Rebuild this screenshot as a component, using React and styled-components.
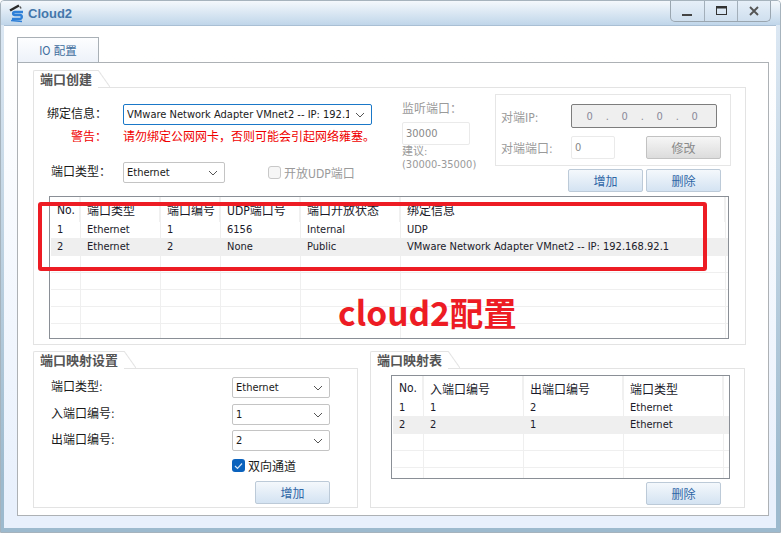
import React from "react";
import styled, { createGlobalStyle } from "styled-components";

const Global = createGlobalStyle`
  html, body { margin: 0; padding: 0; background: #fff; overflow: hidden; }
  * { box-sizing: border-box; }
  body { font-family: "DejaVu Sans Condensed", "Liberation Sans", "Noto Sans CJK SC", sans-serif; font-size: 11px; color: #1a1a1a; }
`;

const Window = styled.div`
  position: relative;
  width: 781px;
  height: 533px;
  display: flex;
  flex-direction: column;
  border: 1px solid #a6b3bd;
  border-radius: 4px 4px 0 0;
  background: linear-gradient(#dfeaf5, #9dbace 90%);
  overflow: hidden;
`;
const TitleBar = styled.div`
  height: 24px;
  flex: none;
  display: flex;
  align-items: flex-start;
  justify-content: space-between;
  padding: 0 9px 0 8px;
  background: linear-gradient(#f4f8fc, #c0d6ea);
`;
const TitleGroup = styled.div`
  display: flex;
  align-items: center;
  gap: 3px;
  height: 25px;
`;
const TitleText = styled.span`
  font-family: "Liberation Sans", sans-serif;
  font-size: 13px;
  font-weight: 700;
  color: #4477ab;
`;
const Controls = styled.div`
  display: flex;
  height: 21px;
  border: 1px solid #9aa6b0;
  border-top: none;
  border-radius: 0 0 5px 5px;
  background: linear-gradient(#e6eff8, #cfdfee);
`;
const Control = styled.div`
  width: 33px;
  display: flex;
  align-items: center;
  justify-content: center;
  border-left: ${(p) => (p.$first ? "none" : "1px solid #a3afba")};
  color: #444;
`;
const Client = styled.div`
  flex: 1;
  margin: 0 4px 4px 3px;
  padding: 11px 7px 12px 13px;
  background: linear-gradient(#ffffff 6%, #e8f0fc 95%);
  border-top: 1px solid #a9bfd4;
`;
const TabStrip = styled.div`
  display: flex;
  height: 25px;
`;
const Tab = styled.div`
  width: 82px;
  height: 26px;
  border: 1px solid #a9b0b6;
  background: linear-gradient(#fdfeff, #edf2f9);
  color: #3f6d9d;
  display: flex;
  align-items: center;
  justify-content: center;
  font-size: 11.5px;
`;
const TabPanel = styled.div`
  width: 752px;
  height: 454px;
  padding: 7px 15px 0;
  background: #fff;
  border: 1px solid #adb1b5;
`;
const Group = styled.section`
  width: ${(p) => p.$w}px;
`;
const GroupHead = styled.div`
  display: flex;
  height: 18px;
`;
const GroupTitle = styled.div`
  width: ${(p) => p.$w}px;
  padding-left: 6px;
  border: 1px solid #e3e3e3;
  border-width: 1px 0 0 1px;
  border-radius: 2px 0 0 0;
  font-weight: 700;
  font-size: 13px;
  line-height: 17px;
  color: #555;
  white-space: nowrap;
`;
const GroupSlant = styled.div`
  width: 12px;
  background: linear-gradient(to top right, transparent calc(50% - 1px), #e3e3e3 50%, transparent calc(50% + 1px));
  border-bottom: 1px solid #e3e3e3;
`;
const GroupLine = styled.div`
  flex: 1;
  border-bottom: 1px solid #e3e3e3;
`;
const GroupFrame = styled.div`
  border: 1px solid #e3e3e3;
  border-top: none;
  height: ${(p) => p.$h}px;
  padding: ${(p) => p.$pad || "0"};
`;

const TopRow = styled.div`
  display: flex;
  height: 108px;
`;
const LeftCol = styled.div`
  width: 368px;
  padding-top: 16px;
`;
const FormRow = styled.div`
  display: grid;
  grid-template-columns: 89px auto;
  align-items: center;
  margin-top: ${(p) => p.$mt || 0}px;
`;
const Label = styled.div`
  padding-left: ${(p) => p.$indent || 0}px;
  font-size: 12px;
  line-height: 15px;
  color: ${(p) => (p.$warn ? "#f00000" : "#1a1a1a")};
`;
const WarnText = styled.div`
  color: #f00000;
  font-size: 12px;
  line-height: 15px;
  white-space: nowrap;
`;
const Inline = styled.div`
  display: flex;
  align-items: center;
`;
const SelectBox = styled.div`
  width: ${(p) => p.$w}px;
  height: 21px;
  display: flex;
  align-items: center;
  justify-content: space-between;
  gap: 6px;
  padding: 0 6px 0 3px;
  background: #fff;
  border: 1px solid ${(p) => (p.$focus ? "#1a78c8" : "#c4c4c4")};
  border-radius: 2px;
  white-space: nowrap;
`;
const SelectValue = styled.span`
  flex: 1;
  min-width: 0;
  overflow: hidden;
`;
const GhostCheck = styled.div`
  width: 13px;
  height: 13px;
  margin: 0 3px 0 43px;
  border: 1px solid #c8c8c8;
  border-radius: 3px;
  background: #f6f6f6;
`;
const Muted = styled.span`
  color: #9a9a9a;
  font-size: 12px;
  white-space: nowrap;
`;
const PortCol = styled.div`
  width: 93px;
  padding-top: 15px;
  color: #9a9a9a;
`;
const PortLabel = styled.div`
  line-height: 12px;
  font-size: 12px;
`;
const PortInput = styled.div`
  width: ${(p) => p.$w}px;
  height: 23px;
  margin-top: ${(p) => p.$mt || 0}px;
  padding-left: 3px;
  line-height: 21px;
  background: #fff;
  border: 1px solid #eaeaea;
  border-radius: 2px;
  color: #888;
`;
const Hint = styled.div`
  line-height: 13px;
  font-size: 11px;
  color: #9a9a9a;
  &:first-of-type { margin-top: 2px; font-size: 12px; }
`;
const PeerCol = styled.div`
  width: 236px;
  padding-top: 6px;
`;
const PeerBox = styled.div`
  height: 72px;
  padding: 9px 9px 0 5px;
  border: 1px solid #e6e6e6;
`;
const PeerRow = styled.div`
  display: flex;
  align-items: center;
  margin-top: ${(p) => p.$mt || 0}px;
`;
const PeerLabel = styled(Muted)`
  width: 70px;
  flex: none;
`;
const IpBox = styled.div`
  width: 146px;
  height: 24px;
  padding-left: 9px;
  display: grid;
  grid-template-columns: repeat(7, 17.5px);
  align-items: center;
  justify-items: center;
  background: #efefef;
  border: 1px solid #7d7d7d;
  border-radius: 2px;
  color: #8a8a9a;
`;
const Button = styled.div`
  width: 75px;
  height: 23px;
  display: flex;
  align-items: center;
  justify-content: center;
  flex: none;
  margin-left: ${(p) => p.$ml || 0}px;
  margin-top: ${(p) => p.$mt || 0}px;
  font-size: 12px;
  border: 1px solid ${(p) => (p.$gray ? "#c2c2c2" : "#bccad8")};
  border-radius: 2px;
  color: ${(p) => (p.$gray ? "#8a8a8a" : "#2f66a6")};
  background: ${(p) =>
    p.$gray ? "linear-gradient(#f6f6f6, #dcdcdc)" : "linear-gradient(#f4f8fc, #d4e3f2)"};
`;
const ButtonRow = styled.div`
  display: flex;
  gap: 3px;
  margin: 3px 0 0 73px;
`;

const TableBox = styled.div`
  width: ${(p) => p.$w}px;
  height: ${(p) => p.$h}px;
  margin: ${(p) => p.$m};
  padding-left: 1px;
  border: 1px solid #8a8f96;
  overflow: hidden;
`;
const HeadRow = styled.div`
  display: grid;
  grid-template-columns: ${(p) => p.$cols};
  height: ${(p) => p.$h}px;
`;
const HeadCell = styled.div`
  display: flex;
  align-items: center;
  padding-left: 6px;
  font-size: 12px;
  color: #1a1a2a;
  border-right: 2px solid #f0f0f0;
`;
const BodyRow = styled.div`
  display: grid;
  grid-template-columns: ${(p) => p.$cols};
  height: 17px;
  background: ${(p) => (p.$alt ? "#efefef" : "#fff")};
  border-bottom: 1px solid #efefef;
`;
const BodyCell = styled.div`
  padding-left: 6px;
  line-height: 16px;
  white-space: nowrap;
  color: #1a1a2a;
  border-right: 1px solid #efefef;
`;
const BottomRow = styled.div`
  display: flex;
  gap: 12px;
  margin-top: 6px;
`;
const MapRow = styled.div`
  display: grid;
  grid-template-columns: 181px 98px;
  align-items: center;
  margin-top: ${(p) => p.$mt || 0}px;
`;
const CheckWrap = styled.div`
  display: flex;
  align-items: center;
  gap: 3px;
  margin: 7px 0 0 181px;
  height: 15px;
  font-size: 12px;
`;
const CheckMark = styled.div`
  width: 13px;
  height: 13px;
  border-radius: 3px;
  background: #0a62bd;
  display: flex;
  align-items: center;
  justify-content: center;
`;
const Overlay = styled.div`
  position: absolute;
  left: 37px;
  top: 201px;
  width: 669px;
  height: 69px;
  border: 4px solid #ed1c24;
  border-radius: 3px;
`;
const OverlayText = styled.div`
  position: absolute;
  left: 337px;
  top: 288px;
  font-family: "Noto Sans CJK SC", sans-serif;
  font-weight: 700;
  font-size: 33.5px;
  line-height: 46px;
  color: #ed1c24;
  white-space: nowrap;
`;

const Chevron = () => (
  <svg width="10" height="6" viewBox="0 0 10 6" fill="none" style={{ flex: "none" }}>
    <path d="M1 1l4 4 4-4" stroke="#555" strokeWidth="1" />
  </svg>
);

const Select = ({ w, value, focus }) => (
  <SelectBox $w={w} $focus={focus}>
    <SelectValue>{value}</SelectValue>
    <Chevron />
  </SelectBox>
);

const DataTable = ({ w, h, m, cols, widths, headH, rows, blanks }) => {
  const tpl = widths.map((x) => `${x}px`).join(" ") + " 1fr";
  return (
    <TableBox $w={w} $h={h} $m={m}>
      <HeadRow $cols={tpl} $h={headH}>
        {cols.map((c) => (
          <HeadCell key={c}>{c}</HeadCell>
        ))}
        <span />
      </HeadRow>
      {rows.map((r, i) => (
        <BodyRow key={i} $cols={tpl} $alt={i === 1}>
          {r.map((c, j) => (
            <BodyCell key={j}>{c}</BodyCell>
          ))}
          <span />
        </BodyRow>
      ))}
      {Array.from({ length: blanks }).map((_, i) => (
        <BodyRow key={i} $cols={tpl}>
          {cols.map((c) => (
            <BodyCell key={c} />
          ))}
          <span />
        </BodyRow>
      ))}
    </TableBox>
  );
};

const CloudIcon = () => (
  <svg width="16" height="19" viewBox="0 0 16 19" fill="none">
    <path d="M1 6.5L10 1.5" stroke="#2b2b2b" strokeWidth="2.4" />
    <path d="M11 2.5l1 2" stroke="#555" strokeWidth="1.5" />
    <path d="M14 8H6C3.5 8 3.5 11 6 11h5c2.5 0 2.5 4-.5 4H3" stroke="#2f80d8" strokeWidth="2.4" />
    <path d="M2 16.5l11 1" stroke="#2f80d8" strokeWidth="1.5" />
  </svg>
);

export default function App() {
  return (
    <>
      <Global />
      <Window>
        <TitleBar>
          <TitleGroup>
            <CloudIcon />
            <TitleText>Cloud2</TitleText>
          </TitleGroup>
          <Controls>
            <Control $first>
              <svg width="11" height="12" viewBox="0 0 11 12"><rect x="0" y="9" width="10" height="2" fill="#444" /></svg>
            </Control>
            <Control>
              <svg width="11" height="10" viewBox="0 0 11 10" fill="none">
                <rect x="0.5" y="0.5" width="10" height="8" stroke="#333" />
                <rect x="0" y="0" width="11" height="2.5" fill="#333" />
              </svg>
            </Control>
            <Control>
              <svg width="10" height="10" viewBox="0 0 10 10" fill="none">
                <path d="M1 1l8 8M9 1l-8 8" stroke="#555" strokeWidth="1.9" />
              </svg>
            </Control>
          </Controls>
        </TitleBar>
        <Client>
          <TabStrip>
            <Tab>IO 配置</Tab>
          </TabStrip>
          <TabPanel>
            <Group $w={713}>
              <GroupHead>
                <GroupTitle $w={65}>端口创建</GroupTitle>
                <GroupSlant />
                <GroupLine />
              </GroupHead>
              <GroupFrame $h={257}>
                <TopRow>
                  <LeftCol>
                    <FormRow>
                      <Label $indent={13}>绑定信息：</Label>
                      <Select w={249} focus value="VMware Network Adapter VMnet2 -- IP: 192.168.92.1" />
                    </FormRow>
                    <FormRow $mt={5}>
                      <Label $indent={37} $warn>警告：</Label>
                      <WarnText>请勿绑定公网网卡，否则可能会引起网络雍塞。</WarnText>
                    </FormRow>
                    <FormRow $mt={17}>
                      <Label $indent={17}>端口类型：</Label>
                      <Inline>
                        <Select w={102} value="Ethernet" />
                        <GhostCheck />
                        <Muted>开放UDP端口</Muted>
                      </Inline>
                    </FormRow>
                  </LeftCol>
                  <PortCol>
                    <PortLabel>监听端口：</PortLabel>
                    <PortInput $w={68} $mt={7}>30000</PortInput>
                    <Hint>建议:</Hint>
                    <Hint>(30000-35000)</Hint>
                  </PortCol>
                  <PeerCol>
                    <PeerBox>
                      <PeerRow>
                        <PeerLabel>对端IP:</PeerLabel>
                        <IpBox>
                          <span>0</span><span>.</span><span>0</span><span>.</span><span>0</span><span>.</span><span>0</span>
                        </IpBox>
                      </PeerRow>
                      <PeerRow $mt={8}>
                        <PeerLabel>对端端口:</PeerLabel>
                        <PortInput $w={44}>0</PortInput>
                        <Button $gray $ml={31}>修改</Button>
                      </PeerRow>
                    </PeerBox>
                    <ButtonRow>
                      <Button>增加</Button>
                      <Button>删除</Button>
                    </ButtonRow>
                  </PeerCol>
                </TopRow>
                <DataTable
                  w={680}
                  h={143}
                  m="0 0 0 15px"
                  cols={["No.", "端口类型", "端口编号", "UDP端口号", "端口开放状态", "绑定信息"]}
                  widths={[30, 80, 60, 80, 100, 325]}
                  headH={25}
                  rows={[
                    ["1", "Ethernet", "1", "6156", "Internal", "UDP"],
                    ["2", "Ethernet", "2", "None", "Public", "VMware Network Adapter VMnet2 -- IP: 192.168.92.1"],
                  ]}
                  blanks={5}
                />
              </GroupFrame>
            </Group>
            <BottomRow>
              <Group $w={325}>
                <GroupHead>
                  <GroupTitle $w={91}>端口映射设置</GroupTitle>
                  <GroupSlant />
                  <GroupLine />
                </GroupHead>
                <GroupFrame $h={139} $pad="8px 0 0 17px">
                  <MapRow>
                    <Label>端口类型:</Label>
                    <Select w={98} value="Ethernet" />
                  </MapRow>
                  <MapRow $mt={6}>
                    <Label>入端口编号:</Label>
                    <Select w={98} value="1" />
                  </MapRow>
                  <MapRow $mt={5}>
                    <Label>出端口编号:</Label>
                    <Select w={98} value="2" />
                  </MapRow>
                  <CheckWrap>
                    <CheckMark>
                      <svg width="9" height="8" viewBox="0 0 9 8" fill="none">
                        <path d="M1 4l2.5 2.5L8 1.5" stroke="#d6e6f7" strokeWidth="1.2" />
                      </svg>
                    </CheckMark>
                    双向通道
                  </CheckWrap>
                  <Button $ml={204} $mt={8}>增加</Button>
                </GroupFrame>
              </Group>
              <Group $w={375}>
                <GroupHead>
                  <GroupTitle $w={78}>端口映射表</GroupTitle>
                  <GroupSlant />
                  <GroupLine />
                </GroupHead>
                <GroupFrame $h={139} $pad="6px 0 0 0">
                  <DataTable
                    w={339}
                    h={104}
                    m="0 0 0 20px"
                    cols={["No.", "入端口编号", "出端口编号", "端口类型"]}
                    widths={[31, 100, 100, 100]}
                    headH={24}
                    rows={[
                      ["1", "1", "2", "Ethernet"],
                      ["2", "2", "1", "Ethernet"],
                    ]}
                    blanks={3}
                  />
                  <Button $ml={275} $mt={3}>删除</Button>
                </GroupFrame>
              </Group>
            </BottomRow>
          </TabPanel>
        </Client>
        <Overlay />
        <OverlayText>cloud2配置</OverlayText>
      </Window>
    </>
  );
}
